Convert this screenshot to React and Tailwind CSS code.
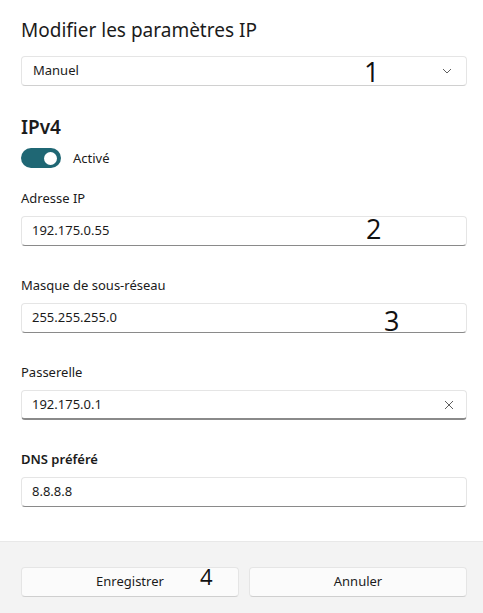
import React from 'react';

const fieldBox =
  'relative h-[30px] rounded-[4px] border border-[#e5e5e5] border-b-[#8a8a8a] bg-white flex items-center px-[10px] text-[13px] text-[#1b1b1b]';

function Marker({ n, className }) {
  return (
    <span className={`absolute font-['Open_Sans'] leading-none text-[#111] ${className}`}>
      {n}
    </span>
  );
}

function Field({ label, value, bold, marker, markerClass, focused }) {
  return (
    <div className="flex flex-col">
      <div className={`h-[20px] leading-[20px] text-[13px] text-[#1b1b1b] ${bold ? 'font-semibold' : ''}`}>
        {label}
      </div>
      <div
        className={`${fieldBox} mt-[8px] ${
          focused ? 'border-b-2 border-b-[#1d5f6a]' : ''
        }`}
      >
        <span>{value}</span>
        {focused && (
          <svg className="ml-auto mr-[2px]" width="10" height="10" viewBox="0 0 10 10">
            <path d="M1 1 L9 9 M9 1 L1 9" stroke="#5f5f5f" strokeWidth="1" fill="none" />
          </svg>
        )}
        {marker && <Marker n={marker} className={markerClass} />}
      </div>
    </div>
  );
}

export default function App() {
  return (
    <div className="w-[483px] h-[613px] flex flex-col bg-white font-['Noto_Sans'] text-[#1b1b1b]">
      <div className="flex-1 pl-[21px] pr-[16px] pt-[16px]">
        <h1 className="text-[19px] leading-[28px] font-normal">Modifier les paramètres IP</h1>

        <div className="relative mt-[12px] h-[30px] rounded-[4px] border border-[#e5e5e5] border-b-[#d0d0d0] bg-white flex items-center pl-[11px] pr-[14px] text-[13px]">
          <span>Manuel</span>
          <svg className="ml-auto" width="10" height="6" viewBox="0 0 10 6">
            <path d="M1 1 L5 5 L9 1" stroke="#5f5f5f" strokeWidth="1" fill="none" />
          </svg>
          <Marker n="1" className="text-[27px] left-[342px] top-[1px]" />
        </div>

        <h2 className="mt-[27px] text-[19px] leading-[28px] font-semibold">IPv4</h2>

        <div className="mt-[7px] flex items-center gap-[12px]">
          <div className="w-[40px] h-[20px] rounded-full bg-[#1f6774] flex items-center justify-end pr-[4px]">
            <div className="w-[13px] h-[13px] rounded-full bg-white" />
          </div>
          <span className="text-[13px] leading-[20px]">Activé</span>
        </div>

        <div className="mt-[20px] flex flex-col gap-[29px]">
          <Field label="Adresse IP" value="192.175.0.55" marker="2" markerClass="text-[27px] left-[344px] top-[-2px]" />
          <Field label="Masque de sous-réseau" value="255.255.255.0" marker="3" markerClass="text-[27px] left-[362px] top-[3px]" />
          <Field label="Passerelle" value="192.175.0.1" focused />
          <Field label="DNS préféré" value="8.8.8.8" bold />
        </div>
      </div>

      <div className="h-[72px] bg-[#f3f3f3] border-t border-[#e8e8e8] pl-[21px] pr-[16px] pt-[25px] flex gap-[10px]">
        <button className="relative flex-1 h-[30px] rounded-[4px] border border-[#e5e5e5] border-b-[#cfcfcf] bg-[#fbfbfb] text-[13px] text-[#1b1b1b]">
          Enregistrer
          <Marker n="4" className="text-[22px] left-[178px] top-[-3px]" />
        </button>
        <button className="flex-1 h-[30px] rounded-[4px] border border-[#e5e5e5] border-b-[#cfcfcf] bg-[#fbfbfb] text-[13px] text-[#1b1b1b]">
          Annuler
        </button>
      </div>
    </div>
  );
}
